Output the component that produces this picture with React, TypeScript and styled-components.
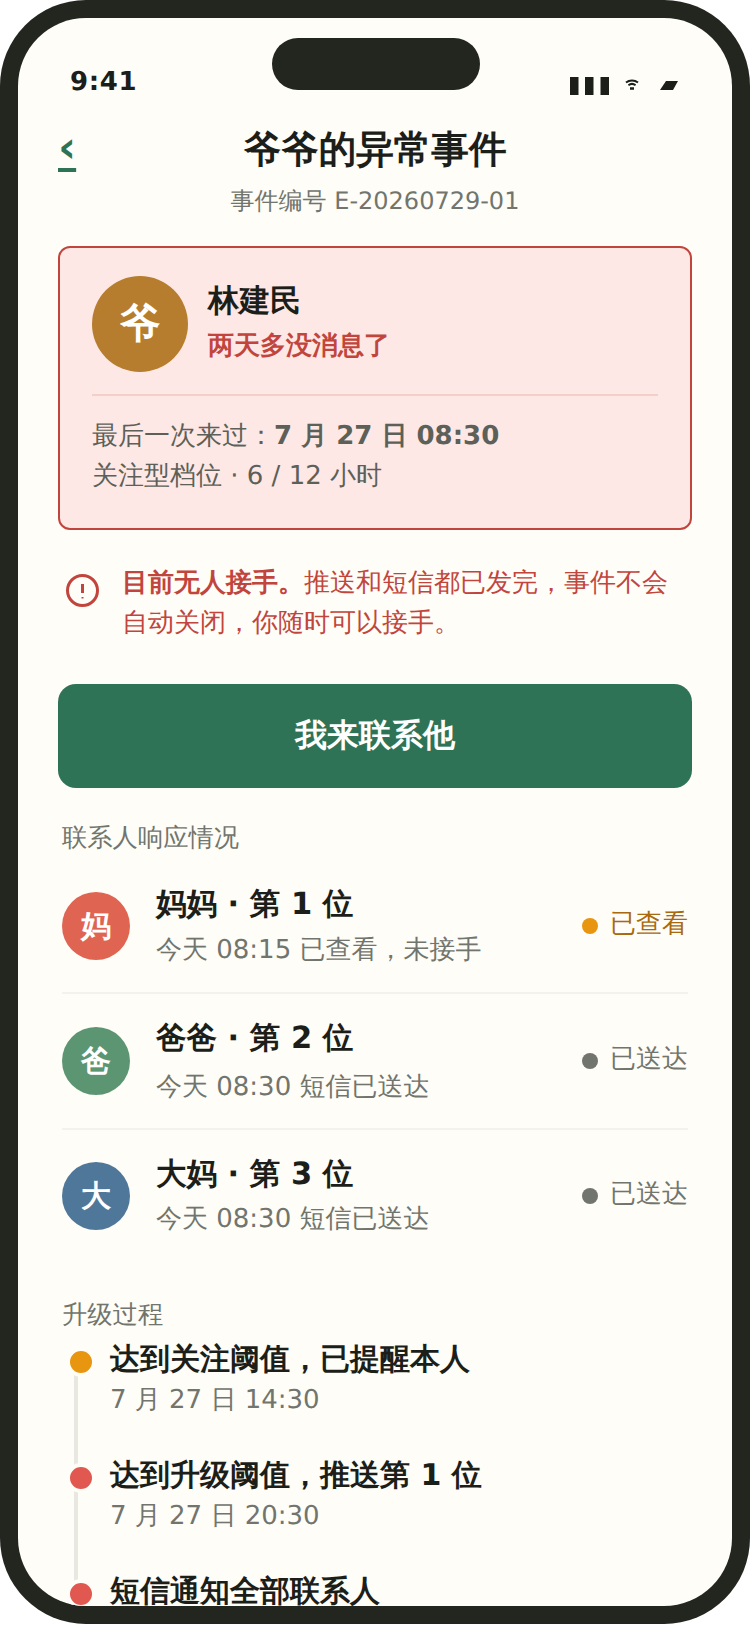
import React from 'react';
import styled, { createGlobalStyle } from 'styled-components';

const Global = createGlobalStyle`
  html, body { margin: 0; padding: 0; background: #fff; }
  body { font-family: "DejaVu Sans", sans-serif; text-rendering: geometricPrecision; }
  * { box-sizing: border-box; }
`;
const Phone = styled.div`
  width: 750px; height: 1624px; background: #23251f; border-radius: 86px; padding: 18px; position: relative; overflow: hidden;
`;
const Screen = styled.div`
  width: 714px; height: 1588px; background: #fefdf7; border-radius: 68px; overflow: hidden; display: flex; flex-direction: column; position: relative;
`;
const Island = styled.div`
  position: absolute; top: 20px; left: 254px; width: 208px; height: 52px; border-radius: 26px; background: #23251f;
`;
const StatusBar = styled.div`
  display: flex; justify-content: space-between; align-items: center; padding: 44px 54px 0 52px; height: 84px; flex: none;
`;
const Time = styled.span`font-size: 26px; font-weight: 700; color: #1c1e1a; letter-spacing: 0.6px;`;
const StatusIcons = styled.div`display: flex; align-items: center; margin-top: 8px;`;
const Wifi = styled.svg`margin: -3px 0 0 16px;`;
const Battery = styled.svg`margin-left: 21px;`;
const Header = styled.div`position: relative; text-align: center; padding: 21px 40px 0; flex: none;`;
const Back = styled.span`
  position: absolute; left: 40px; top: 20px; font-size: 44px; font-weight: 700; color: #2f7356; line-height: 52px;
  text-decoration: underline; text-decoration-thickness: 4px; text-underline-offset: 6px;
`;
const Title = styled.h1`margin: 0; font-size: 37.6px; font-weight: 700; color: #1c1e1a; line-height: 52px;`;
const Sub = styled.div`font-size: 24px; color: #71756d; line-height: 36px; margin-top: 8px;`;
const Card = styled.section`
  flex: none; margin: 27px 22px 0 40px; width: 634px; height: 284px; background: #fde8e6; border: 2px solid #c2453d; border-radius: 12px; padding: 28px 32px 0;
`;
const CardTop = styled.div`display: flex; gap: 20px; padding-bottom: 22px; border-bottom: 2px solid #f3cfc9;`;
const Avatar = styled.div<{ $size: number; $bg: string; $fs: number }>`
  width: ${p => p.$size}px; height: ${p => p.$size}px; border-radius: 50%; background: ${p => p.$bg}; color: #fff; font-size: ${p => p.$fs}px; font-weight: 700; display: flex; align-items: center; justify-content: center; flex: none;
`;
const Name = styled.div`font-size: 31px; font-weight: 700; color: #1c1e1a; line-height: 44px; margin-top: 3px;`;
const Warn = styled.div`font-size: 26px; font-weight: 700; color: #c2453d; line-height: 36px; margin-top: 5px;`;
const Meta = styled.div`font-size: 26px; color: #5c6058; line-height: 40px; margin-top: 20px; strong { font-weight: 700; }`;
const Alert = styled.div`flex: none; display: flex; gap: 23px; margin: 33px 40px 0 48px; font-size: 26px; line-height: 40px; color: #c2453d; strong { font-weight: 700; }`;
const AlertIcon = styled.svg`flex: none; margin-top: 11px;`;
const Cta = styled.button`
  margin: 41px 22px 0 40px; width: 634px; height: 104px; flex: none; border: 0; border-radius: 18px; background: #2f7356; color: #fff; font: 700 32px "DejaVu Sans", sans-serif;
`;
const SectionLabel = styled.div<{ $top: number }>`flex: none; font-size: 25.3px; color: #71756d; line-height: 36px; padding-left: 44px; margin-top: ${p => p.$top}px;`;
const ContactList = styled.div`padding: 0 44px; flex: none; margin-top: 4px;`;
const Row = styled.div<{ $h: number }>`display: flex; align-items: center; gap: 26px; border-bottom: 2px solid #f3f2ec; height: ${p => p.$h}px; &:last-child { border-bottom: 0; }`;
const RowMain = styled.div<{ $lift: number }>`flex: 1; padding-bottom: ${p => p.$lift}px;`;
const RowTitle = styled.div`font-size: 30.5px; font-weight: 700; color: #1c1e1a;`;
const RowSub = styled.div<{ $gap: number }>`font-size: 26px; color: #71756d; margin-top: ${p => p.$gap}px;`;
const Status = styled.div<{ $c: string; $t: string }>`
  display: flex; align-items: center; gap: 12px; font-size: 26px; color: ${p => p.$t}; padding-bottom: 6px;
  &::before { content: ""; width: 16px; height: 16px; border-radius: 50%; background: ${p => p.$c}; margin-top: 6px; }
`;
const Timeline = styled.div`padding: 5px 0 0 52px; display: flex; flex-direction: column; flex: none;`;
const TimeItem = styled.div`position: relative; padding-left: 40px; height: 116px;
  &:not(:last-child)::after { content: ""; position: absolute; left: 4px; top: 19px; width: 4px; height: 110px; background: #e9e8e0; }
`;
const TimeDot = styled.i<{ $c: string }>`
  position: absolute; left: -4px; top: 9px; width: 30px; height: 30px; border-radius: 50%; background: ${p => p.$c}; border: 4px solid #fefdf7; z-index: 1;
`;
const TimeTitle = styled.div`font-size: 30px; font-weight: 700; color: #1c1e1a; line-height: 44px;`;
const TimeSub = styled.div`font-size: 26px; color: #71756d; line-height: 36px;`;

const contacts = [
  { a: '妈', bg: '#e06452', t: '妈妈 · 第 1 位', s: '今天 08:15 已查看，未接手', st: '已查看', c: '#e8950f', tc: '#a9690f', h: 134, g: 6, l: 0 },
  { a: '爸', bg: '#5b9571', t: '爸爸 · 第 2 位', s: '今天 08:30 短信已送达', st: '已送达', c: '#71756d', tc: '#71756d', h: 136, g: 9, l: 0 },
  { a: '大', bg: '#4f7799', t: '大妈 · 第 3 位', s: '今天 08:30 短信已送达', st: '已送达', c: '#71756d', tc: '#71756d', h: 132, g: 5, l: 2 },
];
const events = [
  { t: '达到关注阈值，已提醒本人', s: '7 月 27 日 14:30', c: '#e8950f' },
  { t: '达到升级阈值，推送第 1 位', s: '7 月 27 日 20:30', c: '#e0584f' },
  { t: '短信通知全部联系人', s: '7 月 28 日 08:30', c: '#e0584f' },
];

export default function App() {
  return (
    <Phone>
      <Global />
      <Screen>
        <Island />
        <StatusBar>
          <Time>9:41</Time>
          <StatusIcons>
            <svg width="39" height="18" viewBox="0 0 39 18"><path fill="#1c1e1a" d="M0 0h8.500v18H0zM15 0h8.500v18H15zM30.500 0H39v18h-8.500z" /></svg>
            <Wifi width="14" height="11" viewBox="0 0 14 11" fill="none" stroke="#1c1e1a" strokeWidth="2"><path d="M1 3.500c3.400-2.800 8.600-2.800 12 0M3.400 6.200c2-1.500 5.200-1.500 7.200 0" /><path d="M5 9.500h4" strokeWidth="2.400" /></Wifi>
            <Battery width="18" height="10" viewBox="0 0 18 10"><path fill="#1c1e1a" d="M6 0h12l-5 9H0z" /></Battery>
          </StatusIcons>
        </StatusBar>
        <Header>
          <Back>‹</Back>
          <Title>爷爷的异常事件</Title>
          <Sub>事件编号 E-20260729-01</Sub>
        </Header>
        <Card>
          <CardTop>
            <Avatar $size={96} $bg="#b77d2e" $fs={41}>爷</Avatar>
            <div>
              <Name>林建民</Name>
              <Warn>两天多没消息了</Warn>
            </div>
          </CardTop>
          <Meta>最后一次来过：<strong>7 月 27 日 08:30</strong><br />关注型档位 · 6 / 12 小时</Meta>
        </Card>
        <Alert>
          <AlertIcon width="33" height="33" viewBox="0 0 33 33" fill="none" stroke="#c2453d">
            <circle cx="16.500" cy="16.500" r="15" strokeWidth="3" />
            <path d="M16.500 10v9" strokeWidth="3" />
            <path d="M16.500 23v1.500" strokeWidth="2" />
          </AlertIcon>
          <div><strong>目前无人接手。</strong>推送和短信都已发完，事件不会自动关闭，你随时可以接手。</div>
        </Alert>
        <Cta>我来联系他</Cta>
        <SectionLabel $top={32}>联系人响应情况</SectionLabel>
        <ContactList>
          {contacts.map(c => (
            <Row key={c.a} $h={c.h}>
              <Avatar $size={68} $bg={c.bg} $fs={30}>{c.a}</Avatar>
              <RowMain $lift={c.l}>
                <RowTitle>{c.t}</RowTitle>
                <RowSub $gap={c.g}>{c.s}</RowSub>
              </RowMain>
              <Status $c={c.c} $t={c.tc}>{c.st}</Status>
            </Row>
          ))}
        </ContactList>
        <SectionLabel $top={35}>升级过程</SectionLabel>
        <Timeline>
          {events.map(e => (
            <TimeItem key={e.t}>
              <TimeDot $c={e.c} />
              <TimeTitle>{e.t}</TimeTitle>
              <TimeSub>{e.s}</TimeSub>
            </TimeItem>
          ))}
        </Timeline>
      </Screen>
    </Phone>
  );
}
